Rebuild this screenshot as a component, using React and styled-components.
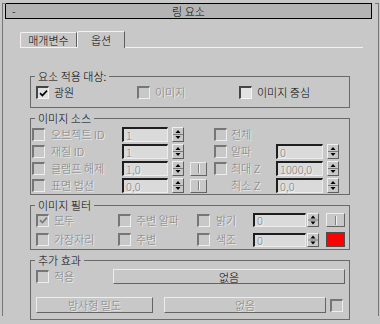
import React from "react";
import styled, { createGlobalStyle, css } from "styled-components";

const GlobalStyle = createGlobalStyle`
  html, body {
    margin: 0;
    padding: 0;
    background: #c8c8c8;
  }
  body {
    font-family: "Noto Sans CJK KR", "Liberation Sans", sans-serif;
    font-size: 11px;
    font-weight: 300;
  }
`;

const dim = css`
  color: #808080;
  text-shadow: 1px 1px 0 #f2f2f2;
`;

const Page = styled.div`
  width: 380px;
  height: 324px;
  overflow: hidden;
  box-sizing: border-box;
  padding-top: 11px;
  background: #c8c8c8;
`;

const Rollout = styled.div`
  position: relative;
  margin-left: 2px;
  width: 377px;
  height: 313px;
  box-sizing: border-box;
  border-left: 1px solid #767676;
  border-right: 1px solid #767676;

  &::before,
  &::after {
    content: "";
    position: absolute;
    top: 0;
    width: 3px;
    height: 1px;
    background: #767676;
  }
  &::before {
    left: 0;
  }
  &::after {
    right: 0;
  }
`;

const TitleBar = styled.div`
  margin: -8px 0 0 2px;
  width: 367px;
  height: 16px;
  box-sizing: border-box;
  border: 1px solid #000;
  background: #b4b4b4;
  display: grid;
  grid-template-columns: 20px 1fr 20px;
  align-items: center;
  line-height: 14px;
  color: #000;

  .dash {
    padding-left: 6px;
  }
  .title {
    text-align: center;
  }
`;

const TabStrip = styled.div`
  margin: 12px 0 0 17px;
  width: 343px;
  height: 16px;
  display: flex;
  align-items: flex-end;
  border-bottom: 1px solid #f2f2f2;
`;

const Tab = styled.div`
  box-sizing: border-box;
  width: ${(p) => p.$w}px;
  height: ${(p) => (p.$active ? 17 : 15)}px;
  margin-bottom: ${(p) => (p.$active ? -1 : 0)}px;
  border-top: 1px solid #f2f2f2;
  border-left: 1px solid #f2f2f2;
  border-right: 1px solid #5e5e5e;
  border-top-left-radius: 2px;
  background: #c8c8c8;
  display: flex;
  align-items: center;
  justify-content: center;
  line-height: 13px;
  color: #000;
`;

const Group = styled.div`
  position: relative;
  margin: ${(p) => p.$mt}px 0 0 27px;
  width: 320px;
  box-sizing: border-box;
  border: 1px solid #6a6a6a;
  padding: ${(p) => p.$pad};
  display: flex;
  flex-direction: column;
  gap: ${(p) => p.$gap || 0}px;
`;

const Legend = styled.span`
  position: absolute;
  top: -8px;
  left: 4px;
  padding: 0 3px;
  line-height: 14px;
  background: #c8c8c8;
  color: #000;
`;

const Row = styled.div`
  display: grid;
  grid-template-columns: ${(p) => p.$cols};
  align-items: center;
  height: ${(p) => p.$h}px;
  padding-left: ${(p) => p.$pl}px;
`;

const CheckItem = styled.div`
  display: flex;
  align-items: center;
  gap: ${(p) => p.$gap ?? 5}px;
  white-space: nowrap;
`;

const Label = styled.span`
  line-height: 13px;
  white-space: nowrap;
  color: #000;
  ${(p) => p.$disabled && dim}
`;

const Box = styled.span`
  display: inline-flex;
  align-items: center;
  justify-content: center;
  flex-shrink: 0;
  width: 13px;
  height: 13px;
  box-sizing: border-box;
  border-style: solid;
  border-width: 2px 1px 1px 2px;
  border-color: ${(p) =>
    p.$disabled ? "#767676 #eeeeee #eeeeee #767676" : "#454545 #f4f4f4 #f4f4f4 #454545"};
  background: ${(p) => (p.$disabled ? "#c8c8c8" : "#e2e2e2")};
`;

const Field = styled.span`
  display: flex;
  align-items: center;
  width: ${(p) => p.$w}px;
  height: ${(p) => p.$h}px;
  box-sizing: border-box;
  border-style: solid;
  border-width: 2px 1px 1px 2px;
  border-color: #1e1e1e #ececec #ececec #1e1e1e;
  background: #dadada;
  padding-left: 2px;
  line-height: 11px;
  ${dim}
`;

const SpinBox = styled.span`
  display: flex;
  width: 12px;
  height: ${(p) => p.$h}px;
  box-sizing: border-box;
  border-style: solid;
  border-width: 1px;
  border-color: #f0f0f0 #5e5e5e #5e5e5e #f0f0f0;
  margin-left: ${(p) => p.$ml || 0}px;
  overflow: hidden;

  svg {
    display: block;
  }
`;

const Button = styled.div`
  width: ${(p) => p.$w}px;
  height: ${(p) => p.$h}px;
  box-sizing: border-box;
  border-style: solid;
  border-width: 1px;
  border-color: #ececec #646464 #646464 #ececec;
  background: #c8c8c8;
  display: flex;
  align-items: center;
  justify-content: center;
  line-height: 12px;
  color: #000;
  ${(p) => p.$disabled && dim}
`;

const PickBar = styled.span`
  width: 1px;
  height: 9px;
  background: #808080;
  box-shadow: 1px 0 0 #f2f2f2;
`;

const Swatch = styled.span`
  width: 19px;
  height: 15px;
  box-sizing: border-box;
  border: 1px solid #4e4e4e;
  background: #ff0000;
`;

function Check({ checked, disabled }) {
  return (
    <Box $disabled={disabled}>
      {checked && (
        <svg width="9" height="9" viewBox="0 0 9 9">
          <path
            d="M1 4.2 L3.4 6.6 L8 1.6"
            fill="none"
            stroke={disabled ? "#7a7a7a" : "#000"}
            strokeWidth="1.7"
          />
        </svg>
      )}
    </Box>
  );
}

function Spin({ h = 15, ml }) {
  const ih = h - 2;
  const mid = ih / 2;
  return (
    <SpinBox $h={h} $ml={ml}>
      <svg width="10" height={ih} viewBox={`0 0 10 ${ih}`}>
        <path d={`M2.5 ${mid - 1.5} H7.5 L5 ${mid - 4.5} Z`} fill="#000" />
        <line x1="0" y1={mid} x2="10" y2={mid} stroke="#7a7a7a" strokeWidth="1" />
        <path d={`M2.5 ${mid + 1.5} H7.5 L5 ${mid + 4.5} Z`} fill="#000" />
      </svg>
    </SpinBox>
  );
}

function Pick({ w = 17, h = 14 }) {
  return (
    <Button $w={w} $h={h}>
      <PickBar />
    </Button>
  );
}

const SRC_COLS = "19px 71px 46px 22px 24px 17px 45px 51px 12px";

const sourceRows = [
  { left: "오브젝트 ID", lv: "1", pick: false, cb: true, right: "전체", rv: null },
  { left: "재질 ID", lv: "1", pick: false, cb: true, right: "알파", rv: "0" },
  { left: "클램프 해제", lv: "1,0", pick: true, cb: true, right: "최대 Z", rv: "1000,0" },
  { left: "표면 법선", lv: "0,0", pick: true, cb: false, right: "최소 Z", rv: "0,0" },
];

export default function App() {
  return (
    <Page>
      <GlobalStyle />
      <Rollout>
        <TitleBar>
          <span className="dash">-</span>
          <span className="title">링 요소</span>
          <span />
        </TitleBar>

        <TabStrip>
          <Tab $w={57}>매개변수</Tab>
          <Tab $w={48} $active>
            옵션
          </Tab>
        </TabStrip>

        <Group $mt={28} $pad="9px 0 8px 0">
          <Legend>요소 적용 대상:</Legend>
          <Row $cols="101px 102px auto" $h={13} $pl={5}>
            <CheckItem>
              <Check checked />
              <Label>광원</Label>
            </CheckItem>
            <CheckItem>
              <Check disabled />
              <Label $disabled>이미지</Label>
            </CheckItem>
            <CheckItem>
              <Check />
              <Label>이미지 중심</Label>
            </CheckItem>
          </Row>
        </Group>

        <Group $mt={10} $pad="8px 0 1px 0" $gap={2}>
          <Legend>이미지 소스</Legend>
          {sourceRows.map((r) => (
            <Row key={r.left} $cols={SRC_COLS} $h={15} $pl={1}>
              <Check disabled />
              <Label $disabled>{r.left}</Label>
              <Field $w={46} $h={15}>
                {r.lv}
              </Field>
              <Spin ml={4} />
              {r.pick ? <Pick /> : <span />}
              {r.cb ? <Check disabled /> : <span />}
              <Label $disabled>{r.right}</Label>
              {r.rv ? (
                <Field $w={47} $h={15}>
                  {r.rv}
                </Field>
              ) : (
                <span />
              )}
              {r.rv ? <Spin /> : <span />}
            </Row>
          ))}
        </Group>

        <Group $mt={10} $pad="7px 0 3px 0" $gap={5}>
          <Legend>이미지 필터</Legend>
          <Row $cols="82px 79px 56px 54px 19px 19px" $h={14} $pl={5}>
            <CheckItem>
              <Check checked disabled />
              <Label $disabled>모두</Label>
            </CheckItem>
            <CheckItem>
              <Check disabled />
              <Label $disabled>주변 알파</Label>
            </CheckItem>
            <CheckItem $gap={6}>
              <Check disabled />
              <Label $disabled>밝기</Label>
            </CheckItem>
            <Field $w={53} $h={14}>
              0
            </Field>
            <Spin h={14} />
            <Pick w={19} h={14} />
          </Row>
          <Row $cols="82px 79px 56px 54px 19px 19px" $h={14} $pl={5}>
            <CheckItem>
              <Check disabled />
              <Label $disabled>가장자리</Label>
            </CheckItem>
            <CheckItem>
              <Check disabled />
              <Label $disabled>주변</Label>
            </CheckItem>
            <CheckItem $gap={6}>
              <Check disabled />
              <Label $disabled>색조</Label>
            </CheckItem>
            <Field $w={53} $h={14}>
              0
            </Field>
            <Spin h={14} />
            <Swatch />
          </Row>
        </Group>

        <Group $mt={10} $pad="8px 0 6px 0" $gap={13}>
          <Legend>추가 효과</Legend>
          <Row $cols="77px 232px" $h={15} $pl={5}>
            <CheckItem>
              <Check disabled />
              <Label $disabled>적용</Label>
            </CheckItem>
            <Button $w={232} $h={15}>
              없음
            </Button>
          </Row>
          <Row $cols="128px 166px 13px" $h={16} $pl={5}>
            <Button $w={117} $h={16} $disabled>
              방사형 밀도
            </Button>
            <Button $w={162} $h={16} $disabled>
              없음
            </Button>
            <Check disabled />
          </Row>
        </Group>
      </Rollout>
    </Page>
  );
}
